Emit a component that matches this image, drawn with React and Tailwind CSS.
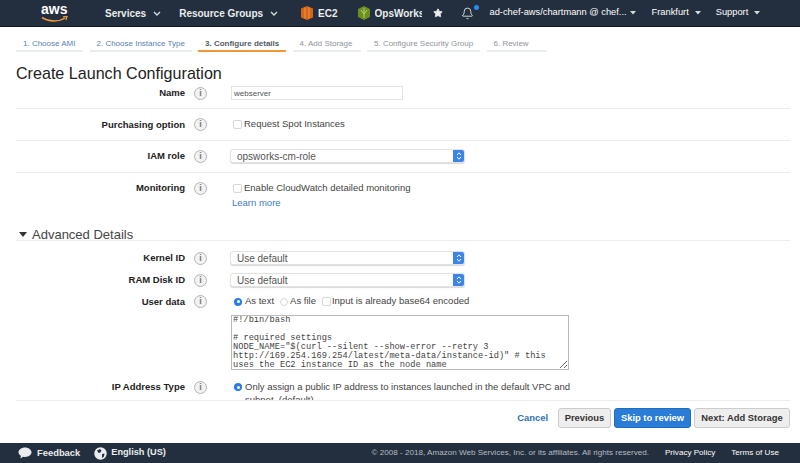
import { Star, Bell } from "lucide-react";

const sans = { fontFamily: '"Liberation Sans", Arial, sans-serif' };

const tabs = [
  { label: "1. Choose AMI", width: "w-[67px]", color: "text-[#5b7fb5]", line: "bg-[#eaeded]" },
  { label: "2. Choose Instance Type", width: "w-[102px]", color: "text-[#5b7fb5]", line: "bg-[#eaeded]" },
  { label: "3. Configure details", width: "w-[88px]", color: "text-[#545b64] font-bold", line: "bg-[#f2963a]" },
  { label: "4. Add Storage", width: "w-[68px]", color: "text-[#8f9499]", line: "bg-[#eaeded]" },
  { label: "5. Configure Security Group", width: "w-[113px]", color: "text-[#8f9499]", line: "bg-[#eaeded]" },
  { label: "6. Review", width: "w-[60px]", color: "text-[#8f9499]", line: "bg-[#eaeded]" },
];

function Caret({ className = "" }) {
  return (
    <svg width="6" height="4" viewBox="0 0 6 4" className={className}>
      <path d="M0 0h6L3 3.600z" fill="#d5dbdb" />
    </svg>
  );
}

function Chevron({ className = "" }) {
  return (
    <svg width="8" height="5" viewBox="0 0 8 5" fill="none" className={className}>
      <path d="M1 1l3 3 3-3" stroke="#d5dbdb" strokeWidth="1.4" />
    </svg>
  );
}

function Info() {
  return (
    <span className="flex h-[13px] w-[13px] items-center justify-center rounded-full border border-[#b5b5b5] bg-[#f2f2f2] text-[9px] font-bold leading-none text-[#777]">
      i
    </span>
  );
}

function Select({ value }) {
  return (
    <div className="-ml-px flex h-[14px] w-[235px] items-stretch justify-between overflow-hidden rounded-[3px] border border-[#e2e2e2] bg-white shadow-[0_1px_1px_rgba(0,0,0,0.15)]">
      <span className="pl-[6px] text-[10px] leading-[13px] text-[#555]">{value}</span>
      <span className="flex w-[11px] items-center justify-center bg-[#3b84e8]">
        <svg width="6" height="10" viewBox="0 0 6 10" fill="none">
          <path d="M1 4l2-2.200L5 4M1 6l2 2.200L5 6" stroke="white" strokeWidth="1" />
        </svg>
      </span>
    </div>
  );
}

function Check({ className = "" }) {
  return <span className={`h-[9px] w-[9px] shrink-0 rounded-[2px] border border-[#d8d8d8] bg-white ${className}`} />;
}

function Row({ label, height, align = "items-center", divider, children }) {
  return (
    <div className={`grid grid-cols-[169px_46px_1fr] ${height} ${align} ${divider ? "border-b border-[#eaeded]" : ""}`}>
      <div className="text-right text-[9.5px] font-bold leading-[12px] text-[#222]">{label}</div>
      <div className="pl-[9px]">
        <Info />
      </div>
      <div>{children}</div>
    </div>
  );
}

export default function App() {
  return (
    <div className="flex h-[463px] w-[800px] flex-col overflow-hidden bg-white" style={sans}>
      {/* top nav */}
      <div className="flex h-[26px] shrink-0 items-center bg-[#232f3e] text-[10px] font-bold text-[#eaeded]">
        <div className="relative ml-[41px] h-[24px] w-[28px]">
          <span className="absolute left-0 top-[1px] text-[14px] font-bold leading-[14px] text-white">aws</span>
          <svg width="28" height="8" viewBox="0 0 28 8" fill="none" className="absolute left-0 top-[15px]">
            <path d="M1 1.500c7 4.500 17 4.500 23 .5" stroke="#f29d38" strokeWidth="1.500" />
            <path d="M22 .8l4-.3-1.200 3.600" stroke="#f29d38" strokeWidth="1.200" />
          </svg>
        </div>
        <span className="ml-[36px]">Services</span>
        <Chevron className="ml-[7px]" />
        <span className="ml-[18px]">Resource Groups</span>
        <Chevron className="ml-[7px]" />
        <svg width="12" height="14" viewBox="0 0 12 14" className="ml-[23px]">
          <path d="M6 0l6 2.500v9L6 14l-6-2.500v-9z" fill="#d86613" />
          <path d="M4 1.500v11M8 1.500v11" stroke="#f4a261" strokeWidth="0.8" />
        </svg>
        <span className="ml-[5px]">EC2</span>
        <svg width="12" height="14" viewBox="0 0 12 14" className="ml-[20px]">
          <path d="M6 0l6 3v8l-6 3-6-3V3z" fill="#6b8e23" />
          <path d="M6 2v10M3 4l3 4 3-4" stroke="#b6cf6a" strokeWidth="1" fill="none" />
        </svg>
        <span className="ml-[5px] w-[47px] overflow-hidden whitespace-nowrap">OpsWorks</span>
        <Star size={10} fill="#eaeded" stroke="#eaeded" className="ml-[11px]" />
        <div className="relative ml-[18px]">
          <Bell size={13} stroke="#eaeded" strokeWidth={1.6} />
          <span className="absolute -right-[5px] -top-[2px] h-[5px] w-[5px] rounded-full bg-[#2a8cf0]" />
        </div>
        <span className="ml-[16px] w-[135px] whitespace-nowrap text-[9.3px] font-normal text-white">ad-chef-aws/chartmann @ chef...</span>
        <Caret className="ml-[5px]" />
        <span className="ml-[16px] text-[9.3px] font-normal text-white">Frankfurt</span>
        <Caret className="ml-[6px]" />
        <span className="ml-[15px] text-[9.3px] font-normal text-white">Support</span>
        <Caret className="ml-[6px]" />
      </div>
      <div className="h-px shrink-0 bg-[#11181f]" />

      {/* wizard steps */}
      <div className="mt-[4px] flex shrink-0 gap-[6.5px] pl-[16px]">
        {tabs.map((t) => (
          <div key={t.label} className={t.width}>
            <div className={`h-[19px] whitespace-nowrap pl-[7px] pt-[6px] text-[8px] leading-[14px] ${t.color}`}>{t.label}</div>
            <div className={`h-[2px] ${t.line}`} />
          </div>
        ))}
      </div>

      {/* form */}
      <div className="min-h-0 flex-1 overflow-hidden pl-[16px] pr-[10px]">
        <h1 className="mt-[11px] text-[16.1px] font-normal leading-[20px] text-[#222]">Create Launch Configuration</h1>
        <Row label="Name" height="h-[26px] pb-[5px]" divider>
          <div className="h-[14px] w-[172px] border border-[#e3e3e3] bg-white pl-[2px] text-[8px] leading-[13px] text-[#555]">webserver</div>
        </Row>
        <Row label="Purchasing option" height="h-[32px]" divider>
          <div className="flex items-center gap-[2px] pl-[2px] text-[9.5px] text-[#444]">
            <Check />
            Request Spot Instances
          </div>
        </Row>
        <Row label="IAM role" height="h-[32px] pb-[1px]" divider>
          <Select value="opsworks-cm-role" />
        </Row>
        <Row label="Monitoring" height="h-[45px]" align="items-start pt-[9px]">
          <div className="flex items-center gap-[2px] pl-[2px] text-[9.5px] leading-[12px] text-[#444]">
            <Check />
            Enable CloudWatch detailed monitoring
          </div>
          <div className="mt-[3px] pl-[1px] text-[9.5px] leading-[12px] text-[#3b7dc4]">Learn more</div>
        </Row>

        <div className="mt-[9px] flex h-[14px] items-center border-b border-[#eaeded] pt-[2px]">
          <svg width="8" height="5" viewBox="0 0 8 5" className="ml-[3px]">
            <path d="M0 0h8L4 5z" fill="#333" />
          </svg>
          <span className="ml-[5px] text-[13px] text-[#444]">Advanced Details</span>
        </div>

        <div className="mt-[6px] flex flex-col">
          <Row label="Kernel ID" height="h-[22px]">
            <Select value="Use default" />
          </Row>
          <Row label="RAM Disk ID" height="h-[22px]">
            <Select value="Use default" />
          </Row>
          <Row label="User data" height="h-[21px]">
            <div className="flex items-center whitespace-nowrap pl-[3px] text-[9.5px] text-[#444]">
              <span className="flex h-[8px] w-[8px] items-center justify-center rounded-full bg-[#2a7de1]">
                <span className="h-[3px] w-[3px] rounded-full bg-white" />
              </span>
              <span className="ml-[3px]">As text</span>
              <span className="ml-[6px] h-[8px] w-[8px] rounded-full border border-[#d8d8d8] bg-white" />
              <span className="ml-[2px]">As file</span>
              <Check className="ml-[6px]" />
              <span className="ml-[1px]">Input is already base64 encoded</span>
            </div>
          </Row>
          <div className="grid grid-cols-[215px_1fr]">
            <div />
            <textarea
              readOnly
              className="mt-[3px] h-[55px] w-[338px] resize overflow-hidden border border-[#bbb] bg-white px-[1px] text-[8.7px] leading-[9px] text-[#444] outline-none"
              style={{ fontFamily: '"Liberation Mono", monospace' }}
              defaultValue={`#!/bin/bash\n\n# required settings\nNODE_NAME="$(curl --silent --show-error --retry 3 http://169.254.169.254/latest/meta-data/instance-id)" # this uses the EC2 instance ID as the node name`}
            />
          </div>
          <Row label="IP Address Type" height="h-[30px]" align="items-start pt-[11px]">
            <div className="relative w-[340px] pl-[14px] text-[9.5px] leading-[12.5px] text-[#444]">
              <span className="absolute left-[3px] top-[2px] flex h-[8px] w-[8px] items-center justify-center rounded-full bg-[#2a7de1]">
                <span className="h-[3px] w-[3px] rounded-full bg-white" />
              </span>
              Only assign a public IP address to instances launched in the default VPC and subnet. (default)
            </div>
          </Row>
        </div>
      </div>

      {/* actions */}
      <div className="ml-[16px] mr-[10px] flex h-[43px] shrink-0 items-start justify-end border-t border-[#eaeded] pt-[7px]">
        <span className="mr-[10px] mt-[3px] text-[9.4px] font-bold text-[#2e73b8]">Cancel</span>
        <button className="h-[20px] w-[53px] rounded-[3px] border border-[#ccc] bg-[#eee] text-[9.4px] font-bold text-[#333]">Previous</button>
        <button className="ml-[3px] h-[20px] w-[77px] rounded-[3px] border border-[#1f6fbf] bg-[#2a7cd6] text-[9.4px] font-bold text-white">Skip to review</button>
        <button className="ml-[3px] h-[20px] w-[96px] rounded-[3px] border border-[#ccc] bg-[#eee] text-[9.4px] font-bold text-[#333]">Next: Add Storage</button>
      </div>

      {/* footer */}
      <div className="flex h-[20px] shrink-0 items-center bg-[#232f3e] text-[8.1px] text-[#eaeded]">
        <svg width="14" height="12" viewBox="0 0 14 12" className="ml-[18px]">
          <path d="M7 0.500c3.600 0 6.500 2.200 6.500 4.800S10.600 10 7 10c-.7 0-1.400-.1-2-.2L2.500 11.500l.4-2.700C1.400 8 .5 6.700.5 5.300.5 2.700 3.400.5 7 .5z" fill="#eaeded" />
        </svg>
        <span className="ml-[5px] text-[9.4px] font-bold">Feedback</span>
        <svg width="13" height="13" viewBox="0 0 13 13" className="ml-[14px]">
          <circle cx="6.500" cy="6.500" r="6.200" fill="#eaeded" />
          <path d="M3 3.500l3-1.500 1.500 1.500-1 2-2 .5zM8 7l2.500-.5-.5 3-2 1.500z" fill="#232f3e" />
        </svg>
        <span className="ml-[4px] text-[9.2px] font-bold">English (US)</span>
        <span className="ml-auto text-[#b6bcc2]">© 2008 - 2018, Amazon Web Services, Inc. or its affiliates. All rights reserved.</span>
        <span className="ml-[16px] text-white">Privacy Policy</span>
        <span className="ml-[16px] mr-[21px] text-white">Terms of Use</span>
      </div>
    </div>
  );
}
